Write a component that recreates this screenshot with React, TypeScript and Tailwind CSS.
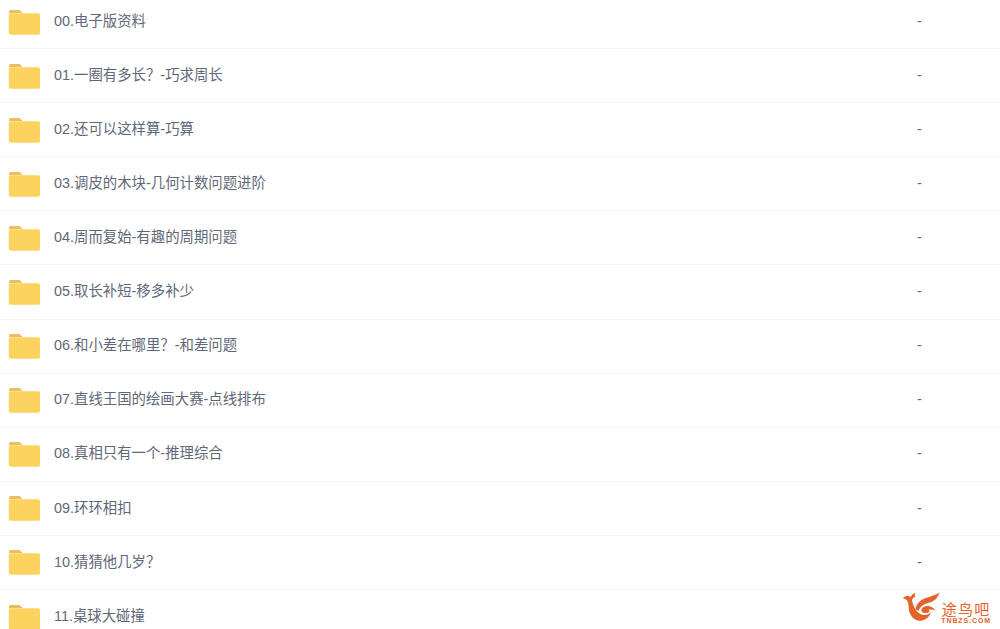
import React from 'react';

const items = [
  '00.电子版资料',
  '01.一圈有多长？-巧求周长',
  '02.还可以这样算-巧算',
  '03.调皮的木块-几何计数问题进阶',
  '04.周而复始-有趣的周期问题',
  '05.取长补短-移多补少',
  '06.和小差在哪里？-和差问题',
  '07.直线王国的绘画大赛-点线排布',
  '08.真相只有一个-推理综合',
  '09.环环相扣',
  '10.猜猜他几岁？',
  '11.桌球大碰撞',
];

const FolderIcon = () => (
  <svg width="32" height="26" viewBox="0 0 32 26" className="shrink-0">
    <path d="M1 2.5A1.5 1.5 0 0 1 2.5 1h8.2c.8 0 1.5.4 2 1L14.5 4H1z" fill="#e8bf62" />
    <path d="M0.8 6A1.8 1.8 0 0 1 2.6 4.2h27.6A1.8 1.8 0 0 1 32 6v18a1.8 1.8 0 0 1-1.8 1.8H2.6A1.8 1.8 0 0 1 .8 24z" fill="#fdd35f" />
  </svg>
);

// site watermark, bottom right corner
const Watermark = () => (
  <div className="absolute right-[9px] bottom-[5px] flex items-center">
    <svg width="40" height="31" viewBox="0 0 42 34">
      <path d="M0 6.5 C3 4 6 4 9 5.5 C9 3.5 11 1.5 14 1 C12.5 3 13 4.5 14 5.5 C10 6 9.5 9 11 13 C13 19 16.5 24 21.5 25 C25 25.8 29 24.5 31 22 C29 28 24 32 18.5 31.5 C11.5 31 7 25 6.5 18 C6.2 13.5 6 10 3.5 8.2 C2.5 7.5 1 7 0 6.5Z" fill="#e4622c" />
      <path d="M14 19 C14 13 20 8 27 6 C32 4.5 36 3 40 .8 C38.5 6 35 10 29.5 11.5 C24 13 19 15 17.5 20.5 C16.5 20.5 15 20 14 19Z" fill="#e4622c" />
      <path d="M20 20 C21 16.5 25 15 29 15.5 C32 16 34 18 36 20.5 C33 19.5 30.5 19 28 19.5 C30 20.5 29.5 22.5 27 23 C24 23.5 20.5 22.5 20 20Z" fill="#e4622c" />
    </svg>
    <div className="mt-[12px] -ml-[1px] flex flex-col items-center text-[#e4622c]">
      <span className="text-[15px] leading-[14px] tracking-[1.2px] font-['Noto_Sans_CJK_SC',sans-serif]">途鸟吧</span>
      <span className="mt-[1px] text-[7px] leading-[7px] font-bold tracking-[0.9px] font-['Liberation_Sans',sans-serif]">TNBZS.COM</span>
    </div>
  </div>
);

export default function App() {
  return (
    <div className="relative h-[629px] w-[1000px] overflow-hidden bg-white font-['Liberation_Sans','Noto_Sans_CJK_SC',sans-serif]">
      <div className="-mt-[5px]">
        {items.map((name) => (
          <div key={name} className="flex h-[54.1px] items-center border-b border-[#f4f5f7] pl-[8px]">
            <FolderIcon />
            <span className="ml-[14px] flex-1 text-[14.4px] text-[#5f6878]">{name}</span>
            <span className="w-[83px] text-[14.4px] text-[#5f6878]">-</span>
          </div>
        ))}
      </div>
      <Watermark />
    </div>
  );
}
